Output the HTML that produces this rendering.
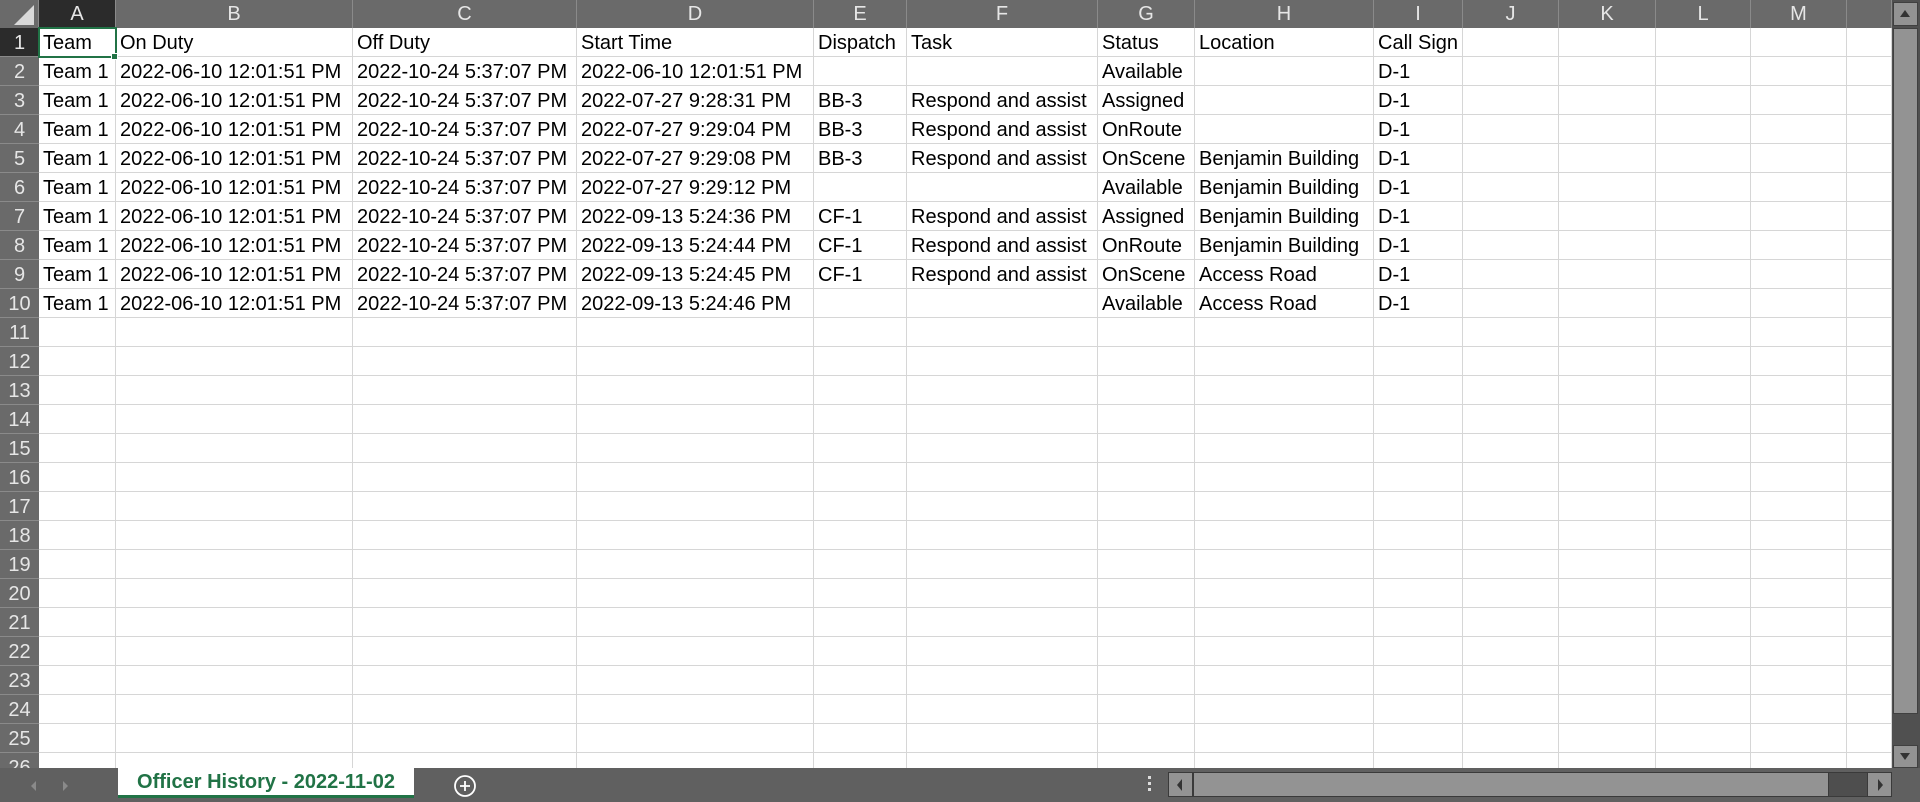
<!DOCTYPE html>
<html><head><meta charset="utf-8"><style>
*{margin:0;padding:0;box-sizing:border-box}
body{width:1920px;height:802px;overflow:hidden;background:#fff;font-family:"Liberation Sans",sans-serif;position:relative}
.hdr{position:absolute;top:0;left:0;width:1892px;height:28px;background:#6a6a6a}
.ch{position:absolute;top:0;height:28px;border-right:1px solid #8a8a8a;color:#e6e6e6;font-size:20px;text-align:center;line-height:29px}
.rh{position:absolute;left:0;width:39px;height:29px;background:#6a6a6a;border-bottom:1px solid #8a8a8a;color:#e6e6e6;font-size:20px;text-align:center;line-height:30px}
.vl{position:absolute;top:28px;height:740px;width:1px;background:#d6d6d6}
.hl{position:absolute;left:39px;width:1853px;height:1px;background:#d6d6d6}
.t{position:absolute;font-size:20px;color:#000;line-height:30px;white-space:nowrap}
</style></head><body>
<div class="hdr"></div>
<div style="position:absolute;left:0;top:0;width:39px;height:28px;background:#6a6a6a;border-right:1px solid #8a8a8a"></div>
<svg style="position:absolute;left:14px;top:5px" width="20" height="20"><polygon points="20,0 20,20 0,20" fill="#d9d9d9"/></svg>
<div id="cells"></div>
<script>
var b=[39,116,353,577,814,907,1098,1195,1374,1463,1559,1656,1751,1847,1892];
var L="ABCDEFGHIJKLMN";var h="";
for(var i=0;i<14;i++){var bg=i==0?"background:#2b2b2b;":"";h+='<div class="ch" style="'+bg+'left:'+b[i]+'px;width:'+(b[i+1]-b[i])+'px">'+(i<13?L[i]:'')+'</div>';}
for(var i=1;i<15;i++)h+='<div class="vl" style="left:'+(b[i]-1)+'px"></div>';
for(var r=1;r<=26;r++){var y=28+(r-1)*29;var bg=r==1?"background:#2b2b2b;":"";h+='<div class="rh" style="'+bg+'top:'+y+'px">'+r+'</div>';h+='<div class="hl" style="top:'+(y+28)+'px"></div>';}
var data=[["Team","On Duty","Off Duty","Start Time","Dispatch","Task","Status","Location","Call Sign"]];
var st=["2022-06-10 12:01:51 PM","2022-07-27 9:28:31 PM","2022-07-27 9:29:04 PM","2022-07-27 9:29:08 PM","2022-07-27 9:29:12 PM","2022-09-13 5:24:36 PM","2022-09-13 5:24:44 PM","2022-09-13 5:24:45 PM","2022-09-13 5:24:46 PM"];
var dp=["","BB-3","BB-3","BB-3","","CF-1","CF-1","CF-1",""];
var ss=["Available","Assigned","OnRoute","OnScene","Available","Assigned","OnRoute","OnScene","Available"];
var lc=["","","","Benjamin Building","Benjamin Building","Benjamin Building","Benjamin Building","Access Road","Access Road"];
for(var k=0;k<9;k++)data.push(["Team 1","2022-06-10 12:01:51 PM","2022-10-24 5:37:07 PM",st[k],dp[k],dp[k]?"Respond and assist":"",ss[k],lc[k],"D-1"]);
for(var r=0;r<data.length;r++)for(var c=0;c<9;c++)if(data[r][c])h+='<div class="t" style="left:'+(b[c]+4)+'px;top:'+(28+r*29)+'px">'+data[r][c]+'</div>';
document.getElementById("cells").innerHTML=h;
</script>
<div style="position:absolute;left:38px;top:27px;width:79px;height:31px;border:2px solid #217346"></div>
<div style="position:absolute;left:111px;top:53px;width:7px;height:7px;background:#217346;border:1px solid #fff"></div>
<div style="position:absolute;left:1892px;top:0;width:28px;height:768px;background:#505050"></div>
<div style="position:absolute;left:1893px;top:2px;width:25px;height:24px;background:#939393;border:1px solid #404040"></div>
<svg style="position:absolute;left:1899px;top:9px" width="12" height="10"><polygon points="6,1 11,8 1,8" fill="#333"/></svg>
<div style="position:absolute;left:1893px;top:28px;width:25px;height:686px;background:#939393;border:1px solid #404040"></div>
<div style="position:absolute;left:1893px;top:745px;width:25px;height:23px;background:#939393;border:1px solid #404040"></div>
<svg style="position:absolute;left:1899px;top:751px" width="12" height="10"><polygon points="1,2 11,2 6,9" fill="#333"/></svg>
<div style="position:absolute;left:0;top:768px;width:1920px;height:34px;background:#606060"></div>
<svg style="position:absolute;left:28px;top:778px" width="12" height="16"><polygon points="8,3 3,8 8,13" fill="#8a8a8a"/></svg>
<svg style="position:absolute;left:60px;top:778px" width="12" height="16"><polygon points="3,3 8,8 3,13" fill="#8a8a8a"/></svg>
<div style="position:absolute;left:118px;top:768px;width:296px;height:30px;background:#fff;border-bottom:3px solid #217346;color:#217346;font-weight:bold;font-size:20px;line-height:29px;text-align:center">Officer History - 2022-11-02</div>
<svg style="position:absolute;left:453px;top:774px" width="24" height="24"><circle cx="12" cy="12" r="10" fill="none" stroke="#fff" stroke-width="1.8"/><path d="M12 7v10M7 12h10" stroke="#fff" stroke-width="1.8"/></svg>
<div style="position:absolute;left:1148px;top:776px;width:3px;height:3px;background:#ddd;box-shadow:0 6px #ddd,0 12px #ddd"></div>
<div style="position:absolute;left:1168px;top:772px;width:724px;height:25px;background:#4e4e4e;border:1px solid #3a3a3a"></div>
<div style="position:absolute;left:1168px;top:772px;width:25px;height:25px;background:#939393;border:1px solid #3a3a3a"></div>
<svg style="position:absolute;left:1175px;top:778px" width="10" height="14"><polygon points="7,1 2,7 7,13" fill="#333"/></svg>
<div style="position:absolute;left:1193px;top:772px;width:636px;height:25px;background:#939393;border:1px solid #3a3a3a"></div>
<div style="position:absolute;left:1867px;top:772px;width:25px;height:25px;background:#939393;border:1px solid #3a3a3a"></div>
<svg style="position:absolute;left:1875px;top:778px" width="10" height="14"><polygon points="3,1 8,7 3,13" fill="#333"/></svg>
</body></html>
